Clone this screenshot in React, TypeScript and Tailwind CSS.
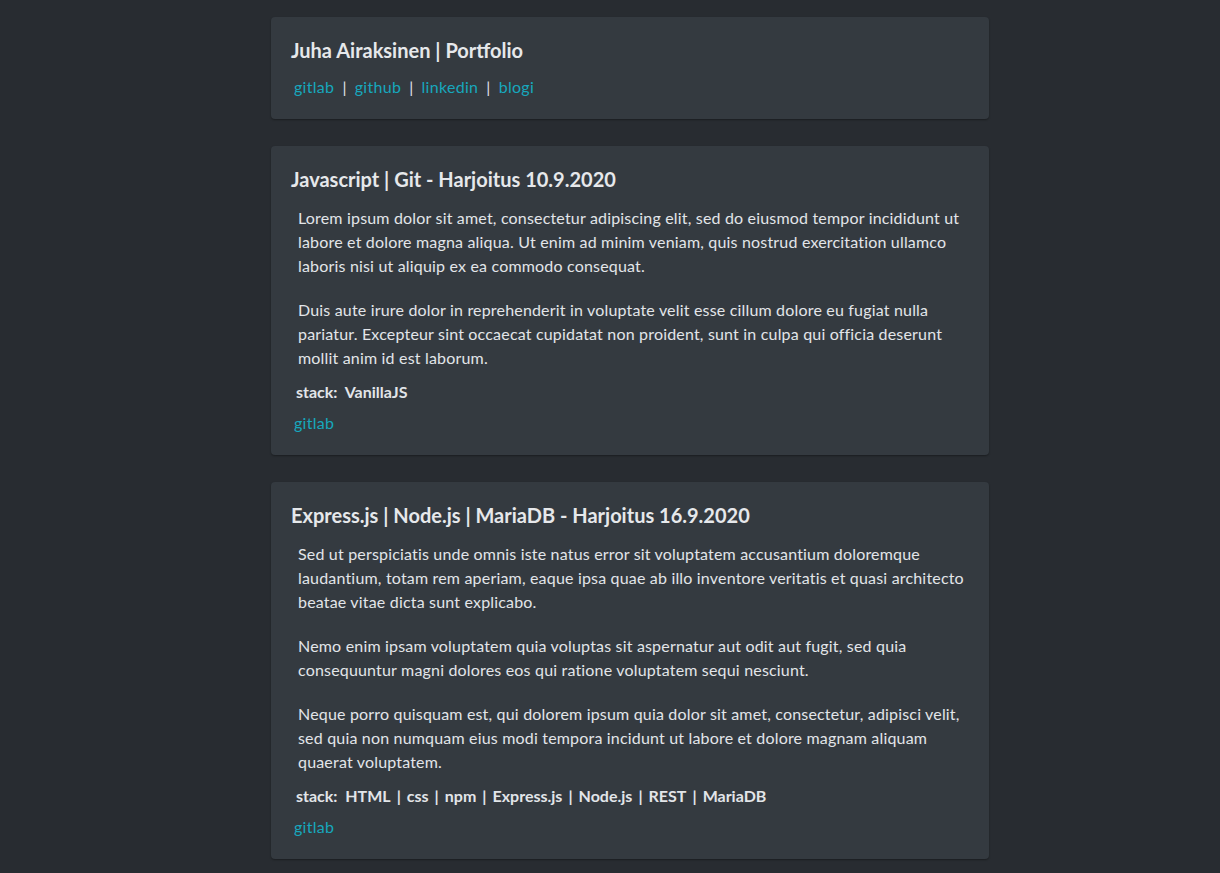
const links = ['gitlab', 'github', 'linkedin', 'blogi']

type Project = {
  title: string
  paragraphs: string[]
  stack: string[]
}

const projects: Project[] = [
  {
    title: 'Javascript | Git - Harjoitus 10.9.2020',
    paragraphs: [
      'Lorem ipsum dolor sit amet, consectetur adipiscing elit, sed do eiusmod tempor incididunt ut labore et dolore magna aliqua. Ut enim ad minim veniam, quis nostrud exercitation ullamco laboris nisi ut aliquip ex ea commodo consequat.',
      'Duis aute irure dolor in reprehenderit in voluptate velit esse cillum dolore eu fugiat nulla pariatur. Excepteur sint occaecat cupidatat non proident, sunt in culpa qui officia deserunt mollit anim id est laborum.',
    ],
    stack: ['VanillaJS'],
  },
  {
    title: 'Express.js | Node.js | MariaDB - Harjoitus 16.9.2020',
    paragraphs: [
      'Sed ut perspiciatis unde omnis iste natus error sit voluptatem accusantium doloremque laudantium, totam rem aperiam, eaque ipsa quae ab illo inventore veritatis et quasi architecto beatae vitae dicta sunt explicabo.',
      'Nemo enim ipsam voluptatem quia voluptas sit aspernatur aut odit aut fugit, sed quia consequuntur magni dolores eos qui ratione voluptatem sequi nesciunt.',
      'Neque porro quisquam est, qui dolorem ipsum quia dolor sit amet, consectetur, adipisci velit, sed quia non numquam eius modi tempora incidunt ut labore et dolore magnam aliquam quaerat voluptatem.',
    ],
    stack: ['HTML', 'css', 'npm', 'Express.js', 'Node.js', 'REST', 'MariaDB'],
  },
]

const Card = ({ children }: { children: React.ReactNode }) => (
  <div className="w-[718px] rounded bg-[#343a40] px-5 pt-[21px] pb-5 shadow-[0_1px_2px_rgba(0,0,0,0.35)]">
    {children}
  </div>
)

export default function App() {
  return (
    <div className="min-h-screen bg-[#282c31] pt-[17px] pb-8 text-[#e2e5e9] font-['Lato','Liberation_Sans',sans-serif]">
      <div className="ml-[271px] flex flex-col gap-[27px]">
        <Card>
          <h1 className="text-[20px] leading-6 font-bold text-[#e6e8eb]">Juha Airaksinen | Portfolio</h1>
          <div className="mt-[13px] pl-[3px] text-[16px] leading-6 tracking-[0.3px]">
            {links.map((l, i) => (
              <span key={l}>
                {i > 0 && <span className="mx-[8px]">|</span>}
                <a href="#" className="text-[#17a7bd]">{l}</a>
              </span>
            ))}
          </div>
        </Card>

        {projects.map((p) => (
          <Card key={p.title}>
            <h2 className="text-[20px] leading-6 font-bold text-[#e6e8eb]">{p.title}</h2>
            <div className="mt-[15px] pl-[7px] flex flex-col gap-5 text-[16px] leading-6 tracking-[0.18px]">
              {p.paragraphs.map((t, i) => <p key={i}>{t}</p>)}
            </div>
            <div className="mt-[11px] pl-[5px] text-[16px] leading-[22px] font-bold">
              stack:&nbsp; {p.stack.map((s, i) => (
                <span key={s}>{i > 0 && <span className="mx-[6px]">|</span>}{s}</span>
              ))}
            </div>
            <a href="#" className="mt-[8px] block pl-[3px] text-[16px] leading-6 tracking-[0.3px] text-[#17a7bd]">gitlab</a>
          </Card>
        ))}
      </div>
    </div>
  )
}
